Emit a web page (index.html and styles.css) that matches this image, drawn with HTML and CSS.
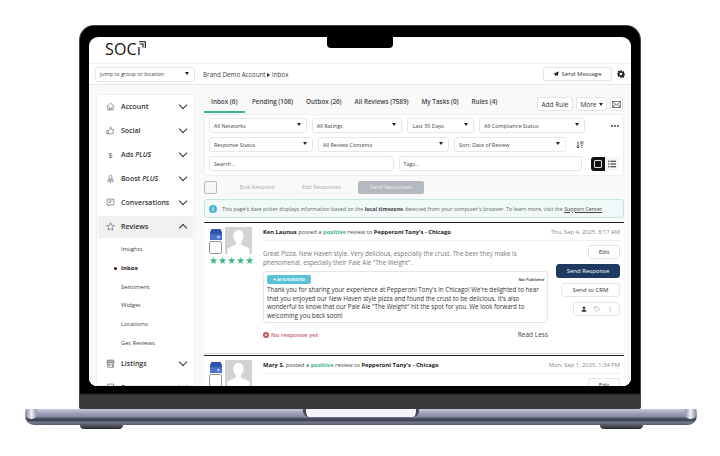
FILE: index.html
```html
<!DOCTYPE html>
<html lang="en">
<head>
    <meta charset="UTF-8">
    <title>SOCi Inbox</title>
    <link rel="stylesheet" href="styles.css">
</head>
<body>
    <div class="laptop">
        <div class="lid">
            <div class="notch"></div>
            <div class="screen">
                <!-- Logo Bar -->
                <div class="logo-bar">
                    <div class="logo">SOC<span class="logo-i">ı</span>
                        <svg class="logo-mark" viewBox="0 0 8 8"><path d="M1 .7h6.300V7M1.500 3h3.500v3.500" fill="none" stroke="#111" stroke-width="1.100"/></svg>
                    </div>
                </div>

                <!-- Toolbar -->
                <div class="toolbar">
                    <div class="select jump">jump to group or location<span class="caret"></span></div>
                    <div class="crumbs">Brand Demo Account <span class="crumb-arrow"></span> Inbox</div>
                    <div class="btn send-message">
                        <svg class="ico-s" viewBox="0 0 10 10"><path d="M9.500.5 7.800 8.500 5 6.800 3.800 9 3.300 6 .5 4.800z" fill="#222"/></svg>
                        Send Message
                    </div>
                    <svg class="gear" viewBox="0 0 24 24"><path d="M10 1h4l.6 3.200 2 .9 2.800-1.800 2.800 2.800-1.800 2.800.9 2 3.200.6v4l-3.200.6-.9 2 1.800 2.800-2.800 2.800-2.800-1.800-2 .9L14 23h-4l-.6-3.200-2-.9-2.800 1.800-2.800-2.800 1.800-2.800-.9-2L0 14v-4l3.200-.6.9-2L2.300 4.600l2.800-2.800 2.800 1.800 2-.9zM12 8a4 4 0 1 0 0 8 4 4 0 0 0 0-8z" fill="#222" fill-rule="evenodd"/></svg>
                </div>

                <div class="workspace">
                    <!-- Sidebar -->
                    <div class="sidebar">
                        <div class="nav-item">
                            <svg class="nav-ico" viewBox="0 0 12 12"><path d="M1 6 6 1.500 11 6M2.500 5v5.500h7V5M4.500 10.500V8h3v2.500" fill="none" stroke="#555" stroke-width=".8"/></svg>
                            <span class="nav-label">Account</span><span class="chev"></span>
                        </div>
                        <div class="nav-item">
                            <svg class="nav-ico" viewBox="0 0 12 12"><path d="M1 6h2v4.500H1zM3 6l2.500-2.500V1.500c1.200 0 1.500 1 1.300 3h3.200l-.8 6H3" fill="none" stroke="#555" stroke-width=".8"/></svg>
                            <span class="nav-label">Social</span><span class="chev"></span>
                        </div>
                        <div class="nav-item">
                            <span class="nav-ico dollar">$</span>
                            <span class="nav-label">Ads <em>PLUS</em></span><span class="chev"></span>
                        </div>
                        <div class="nav-item">
                            <svg class="nav-ico" viewBox="0 0 12 12"><path d="M6 1c1.800 1.500 2.200 3.500 2 6H4c-.2-2.500.2-4.500 2-6zM4 6.500 2.500 9v1.500L4.500 9M8 6.500 9.500 9v1.500L7.500 9M5.500 8.500h1v2.500h-1z" fill="none" stroke="#555" stroke-width=".8"/></svg>
                            <span class="nav-label">Boost <em>PLUS</em></span><span class="chev"></span>
                        </div>
                        <div class="nav-item">
                            <svg class="nav-ico" viewBox="0 0 12 12"><path d="M1.500 1.500h9v7.500H5L3.500 10.800V9h-2zM3.500 4h5M3.500 6h3" fill="none" stroke="#555" stroke-width=".8"/></svg>
                            <span class="nav-label">Conversations</span><span class="chev"></span>
                        </div>
                        <div class="nav-item active">
                            <svg class="nav-ico" viewBox="0 0 12 12"><path d="m6 1 1.500 3.400 3.700.4-2.800 2.400.8 3.600L6 9l-3.200 1.800.8-3.600L.8 4.800l3.700-.4z" fill="none" stroke="#555" stroke-width=".8"/></svg>
                            <span class="nav-label">Reviews</span><span class="chev up"></span>
                        </div>
                        <div class="sub-list">
                            <div class="sub-item">Insights</div>
                            <div class="sub-item current">Inbox</div>
                            <div class="sub-item">Sentiment</div>
                            <div class="sub-item">Widget</div>
                            <div class="sub-item">Locations</div>
                            <div class="sub-item">Get Reviews</div>
                        </div>
                        <div class="nav-item">
                            <svg class="nav-ico" viewBox="0 0 12 12"><path d="M2 1.500h8l1 3H1zM2 4.500V11h8V4.500M3 1.500v3M5 1.500v3M7 1.500v3M9 1.500v3M3.500 6.500h2v2h-2zM7 6.500h1.500V11" fill="none" stroke="#555" stroke-width=".8"/></svg>
                            <span class="nav-label">Listings</span><span class="chev"></span>
                        </div>
                        <div class="nav-item">
                            <svg class="nav-ico" viewBox="0 0 12 12"><path d="M2 1.500h8v9H2z" fill="none" stroke="#555" stroke-width=".8"/></svg>
                            <span class="nav-label">Surveys</span><span class="chev"></span>
                        </div>
                    </div>

                    <!-- Main -->
                    <div class="main">
                        <div class="tabs">
                            <div class="tab selected">Inbox (6)</div>
                            <div class="tab">Pending (106)</div>
                            <div class="tab">Outbox (26)</div>
                            <div class="tab">All Reviews (7589)</div>
                            <div class="tab">My Tasks (0)</div>
                            <div class="tab">Rules (4)</div>
                            <div class="tab-actions">
                                <div class="btn add-rule">Add Rule</div>
                                <div class="btn more">More <span class="caret"></span></div>
                                <div class="btn mail">
                                    <svg class="ico-m" viewBox="0 0 12 10"><path d="M.5.500h11v9H.5zM.5.500 6 5.500 11.500.500M.5 9.500l4-5M11.500 9.500l-4-5" fill="none" stroke="#222" stroke-width=".9"/></svg>
                                </div>
                            </div>
                        </div>

                        <div class="filters">
                            <div class="filter-row">
                                <div class="select w98">All Networks<span class="caret"></span></div>
                                <div class="select w91">All Ratings<span class="caret"></span></div>
                                <div class="select w67">Last 30 Days<span class="caret"></span></div>
                                <div class="select w106">All Compliance Status<span class="caret"></span></div>
                                <svg class="dots" viewBox="0 0 8 2"><circle cx="1" cy="1" r=".9" fill="#333"/><circle cx="4" cy="1" r=".9" fill="#333"/><circle cx="7" cy="1" r=".9" fill="#333"/></svg>
                            </div>
                            <div class="filter-row">
                                <div class="select w104">Response Status<span class="caret"></span></div>
                                <div class="select w131">All Review Contents<span class="caret"></span></div>
                                <div class="select w112">Sort: Date of Review<span class="caret"></span></div>
                                <svg class="sort-ico" viewBox="0 0 10 10"><path d="M2.500 1v7.500M.8 6.800l1.700 2 1.700-2M5 1.200h4.500M5.500 3.500h3.500M6 5.800h2M6.500 8h1" fill="none" stroke="#222" stroke-width="1"/></svg>
                            </div>
                            <div class="filter-row">
                                <div class="select w185">Search ..</div>
                                <div class="select w184">Tags ..</div>
                                <div class="view-toggle">
                                    <div class="view-card"><span></span></div>
                                    <div class="view-lines">
                                        <svg viewBox="0 0 10 10"><path d="M3 1.500h7M3 5h7M3 8.500h7M0 1.500h1.800M0 5h1.800M0 8.500h1.800" stroke="#222" stroke-width="1.400" fill="none"/></svg>
                                    </div>
                                </div>
                            </div>
                        </div>

                        <div class="bulk-row">
                            <div class="check big"></div>
                            <div class="bulk-btn">Bulk Respond</div>
                            <div class="bulk-btn edit">Edit Responses</div>
                            <div class="bulk-btn send">Send Responses</div>
                        </div>

                        <div class="notice">
                            <span class="notice-dot">i</span>
                            <span>This page's date picker displays information based on the <b>local timezone</b> detected from your computer's browser. To learn more, visit the <u>Support Center</u>.</span>
                        </div>

                        <!-- Review 1 -->
                        <div class="review">
                            <div class="review-side">
                                <div class="side-top">
                                    <div class="side-marks">
                                        <svg class="gmb" viewBox="0 0 12 11"><path d="M1.500 0h9L12 4v7H0V4z" fill="#4a74cf"/><path d="M0 4a1.500 1.500 0 0 0 3 0 1.500 1.500 0 0 0 3 0 1.500 1.500 0 0 0 3 0 1.500 1.500 0 0 0 3 0L10.500 0h-9z" fill="#2f54a8"/><circle cx="8.500" cy="8" r="1.300" fill="#b9cdf3"/></svg>
                                        <div class="check"></div>
                                    </div>
                                    <svg class="avatar" viewBox="0 0 27 27"><rect width="27" height="27" fill="#d1d3d4"/><path d="M13.500 3c3.500 0 5.500 3 5 7-.4 2.800-1.600 4.500-2.500 5.500v2l8.500 4V27h-22v-5.500l8.500-4v-2c-.9-1-2.100-2.700-2.500-5.500-.5-4 1.500-7 5-7z" fill="#fff"/></svg>
                                </div>
                                <div class="stars">&#9733;&#9733;&#9733;&#9733;&#9733;</div>
                            </div>
                            <div class="review-body">
                                <div class="review-head">
                                    <span><b>Ken Launus</b> posted a <b class="positive">positive</b> review to <b>Pepperoni Tony's - Chicago</b></span>
                                    <span class="review-date">Thu, Sep 4, 2025, 8:17 AM</span>
                                </div>
                                <div class="review-cols">
                                    <div class="review-text">
                                        <p class="quote">Great Pizza. New Haven style. Very delicious, especially the crust. The beer they make is phenomenal, especially their Pale Ale "The Weight".</p>
                                        <div class="reply">
                                            <div class="reply-top">
                                                <span class="ai-badge">&#10022; AI SUGGESTED</span>
                                                <span class="not-published">Not Published</span>
                                            </div>
                                            <p>Thank you for sharing your experience at Pepperoni Tony's in Chicago! We're delighted to hear that you enjoyed our New Haven style pizza and found the crust to be delicious. It's also wonderful to know that our Pale Ale "The Weight" hit the spot for you. We look forward to welcoming you back soon!</p>
                                        </div>
                                        <div class="status-row">
                                            <span class="no-response"><span class="x-dot">&times;</span> No response yet</span>
                                            <span class="read-less">Read Less</span>
                                        </div>
                                    </div>
                                    <div class="review-actions">
                                        <div class="btn edit-btn">Edit</div>
                                        <div class="btn primary">Send Response</div>
                                        <div class="btn crm">Send to CRM</div>
                                        <div class="btn icon-group">
                                            <svg viewBox="0 0 8 8"><path d="M4 .5a1.800 1.800 0 1 1 0 3.600A1.800 1.800 0 0 1 4 .5zM.8 7.500c0-1.800 1.400-2.800 3.200-2.800s3.200 1 3.200 2.800z" fill="#333"/></svg>
                                            <svg viewBox="0 0 8 8"><path d="M.8 1h3l3.400 3.300-3 3L.8 4z" fill="none" stroke="#888" stroke-width=".7"/></svg>
                                            <svg viewBox="0 0 8 8"><path d="M4 1v.8M4 3.600v.8M4 6.200V7" stroke="#333" stroke-width="1"/></svg>
                                        </div>
                                    </div>
                                </div>
                            </div>
                        </div>

                        <!-- Review 2 -->
                        <div class="review">
                            <div class="review-side">
                                <div class="side-top">
                                    <div class="side-marks">
                                        <svg class="gmb" viewBox="0 0 12 11"><path d="M1.500 0h9L12 4v7H0V4z" fill="#4a74cf"/><path d="M0 4a1.500 1.500 0 0 0 3 0 1.500 1.500 0 0 0 3 0 1.500 1.500 0 0 0 3 0 1.500 1.500 0 0 0 3 0L10.500 0h-9z" fill="#2f54a8"/><circle cx="8.500" cy="8" r="1.300" fill="#b9cdf3"/></svg>
                                        <div class="check"></div>
                                    </div>
                                    <svg class="avatar" viewBox="0 0 27 27"><rect width="27" height="27" fill="#d1d3d4"/><path d="M13.500 3c3.500 0 5.500 3 5 7-.4 2.800-1.600 4.500-2.500 5.500v2l8.500 4V27h-22v-5.500l8.500-4v-2c-.9-1-2.100-2.700-2.500-5.500-.5-4 1.500-7 5-7z" fill="#fff"/></svg>
                                </div>
                            </div>
                            <div class="review-body">
                                <div class="review-head">
                                    <span><b>Mary S.</b> posted a <b class="positive">positive</b> review to <b>Pepperoni Tony's - Chicago</b></span>
                                    <span class="review-date">Mon, Sep 1, 2025, 1:34 PM</span>
                                </div>
                                <div class="review-cols">
                                    <div class="review-text"></div>
                                    <div class="review-actions">
                                        <div class="btn edit-btn">Edit</div>
                                    </div>
                                </div>
                            </div>
                        </div>
                    </div>
                </div>
            </div>
        </div>
        <div class="base">
            <div class="base-cap left"></div>
            <div class="thumb"></div>
            <div class="base-cap right"></div>
        </div>
        <div class="feet"><span class="foot"></span><span class="foot"></span></div>
    </div>
</body>
</html>
```

FILE: styles.css
```css
* {
    margin: 0;
    padding: 0;
    box-sizing: border-box;
}
html, body {
    height: 456px;
    overflow: hidden;
    background-color: #fff;
}
body {
    font-family: 'Open Sans', sans-serif;
    color: #333;
    padding-top: 25px;
}
.laptop {
    width: 720px;
}

/* Lid */
.lid {
    position: relative;
    width: 562px;
    height: 384px;
    margin-left: 79px;
    padding: 11px 9px 0;
    background: linear-gradient(#000 0, #000 367px, #393939 369px);
    border: 1px solid #444;
    border-bottom: 0;
    border-radius: 15px 15px 2px 2px;
}
.notch {
    position: absolute;
    top: 11px;
    left: 247px;
    width: 66px;
    height: 11px;
    background-color: #000;
    border-radius: 0 0 4px 4px;
    z-index: 2;
}
.screen {
    height: 349px;
    background-color: #fff;
    border-radius: 9px 9px 8px 8px;
    overflow: hidden;
}

/* Base */
.base {
    position: relative;
    width: 672px;
    height: 16px;
    margin-left: 25px;
    background: linear-gradient(#c6cadb 0, #9ea3b9 25%, #868ba2 48%, #3f4356 62%, #43475a 72%, #74788c 84%, #565a6c 100%);
    border-radius: 1px 1px 9px 9px;
}
.thumb {
    position: absolute;
    top: 0;
    left: 278px;
    width: 116px;
    height: 8px;
    background-color: #f3f5fb;
    border-left: 3px solid #444858;
    border-right: 3px solid #444858;
    border-radius: 0 0 6px 6px;
}
.base-cap {
    position: absolute;
    top: 0;
    width: 11px;
    height: 10px;
    background: linear-gradient(90deg, #8b90a5, #f1f3f8 50%, #8b90a5);
}
.base-cap.left {
    left: 1px;
    border-radius: 0 0 5px 5px;
}
.base-cap.right {
    right: 1px;
    border-radius: 0 0 5px 5px;
}
.feet {
    display: flex;
    justify-content: space-between;
    width: 563px;
    margin-left: 80px;
}
.foot {
    width: 43px;
    height: 4px;
    background: linear-gradient(#55585f, #2b2d33);
    border-radius: 0 0 6px 6px;
}

/* Logo bar */
.logo-bar {
    height: 27px;
    padding: 1px 0 0 16px;
    border-bottom: 1px solid #eee;
}
.logo {
    position: relative;
    display: inline-block;
    font-size: 16px;
    line-height: 22px;
    color: #111;
    letter-spacing: .2px;
}
.logo-i {
    font-size: 15px;
}
.logo-mark {
    position: absolute;
    top: 3px;
    right: -5px;
    width: 8px;
    height: 8px;
}

/* Toolbar */
.toolbar {
    display: flex;
    align-items: center;
    height: 21px;
    padding-left: 6px;
    border-bottom: 1px solid #e8e8e8;
    font-size: 6.3px;
}
.select {
    position: relative;
    display: flex;
    align-items: center;
    height: 15px;
    padding: 0 4px;
    background-color: #fff;
    border: 1px solid #e6e6e6;
    border-radius: 3px;
    font-size: 5.4px;
    color: #444;
}
.caret {
    display: inline-block;
    width: 0;
    height: 0;
    border-left: 2px solid transparent;
    border-right: 2px solid transparent;
    border-top: 3px solid #222;
}
.select .caret {
    position: absolute;
    right: 5px;
    top: 4px;
}
.jump {
    width: 100px;
}
.crumbs {
    margin-left: 8px;
    color: #444;
}
.crumb-arrow {
    display: inline-block;
    border-top: 2px solid transparent;
    border-bottom: 2px solid transparent;
    border-left: 3px solid #222;
}
.btn {
    display: flex;
    align-items: center;
    justify-content: center;
    background-color: #fff;
    border: 1px solid #e4e4e4;
    border-radius: 3px;
    color: #333;
}
.send-message {
    width: 69px;
    height: 14px;
    margin-left: auto;
    gap: 2px;
    font-size: 6px;
}
.ico-s {
    width: 6px;
    height: 6px;
}
.gear {
    width: 8px;
    height: 8px;
    margin: 0 6px 0 5px;
}

/* Layout */
.workspace {
    display: flex;
    height: 301px;
    padding: 9px 7px 0 7px;
    background-color: #f9f9f9;
}
.sidebar {
    width: 99px;
    padding: 0 1px;
    background-color: #fff;
    border: 1px solid #eee;
    border-radius: 3px;
    flex-shrink: 0;
}
.nav-item {
    display: flex;
    align-items: center;
    height: 22px;
    margin-bottom: 2.2px;
    padding: 0 6px 0 8px;
    font-size: 7px;
    font-weight: 600;
    color: #333;
}
.nav-item.active {
    background-color: #f1f1f1;
}
.nav-ico {
    width: 9px;
    height: 9px;
    margin-right: 6px;
    flex-shrink: 0;
}
.dollar {
    font-size: 8px;
    font-weight: 400;
    line-height: 9px;
    color: #555;
    text-align: center;
}
.nav-label em {
    font-weight: 600;
}
.chev {
    width: 6px;
    height: 6px;
    margin: -3px 1px 0 auto;
    border-right: 1px solid #333;
    border-bottom: 1px solid #333;
    transform: rotate(45deg);
}
.chev.up {
    margin-top: 3px;
    transform: rotate(225deg);
}
.sub-item {
    position: relative;
    height: 18.7px;
    padding-left: 23px;
    font-size: 6px;
    line-height: 18.7px;
    color: #444;
}
.sub-item.current {
    font-weight: 700;
    color: #222;
}
.sub-item.current::before {
    content: "";
    position: absolute;
    left: 16px;
    top: 8px;
    width: 3px;
    height: 3px;
    background-color: #111;
    border-radius: 50%;
}
.main {
    width: 420px;
    margin-left: 9px;
    flex-shrink: 0;
}

/* Tabs */
.tabs {
    display: flex;
    align-items: flex-start;
    height: 20px;
}
.tab {
    height: 14px;
    padding: 3px 6px 0 7px;
    font-size: 6.3px;
    font-weight: 600;
    color: #444;
    line-height: 9px;
    white-space: nowrap;
}
.tab.selected {
    box-sizing: content-box;
    width: 34px;
    padding-right: 0;
    border-bottom: 2px solid #3fb58e;
}
.tab-actions {
    display: flex;
    gap: 3px;
    margin: 3px 0 0 auto;
    height: 14px;
}
.add-rule {
    width: 36px;
    font-size: 6.5px;
}
.more {
    width: 31px;
    gap: 2px;
    font-size: 6.5px;
}
.mail {
    width: 13px;
    margin-right: 1px;
}
.ico-m {
    width: 9px;
    height: 7px;
}

/* Filters */
.filters {
    display: flex;
    flex-direction: column;
    gap: 4px;
    height: 62px;
    padding: 3px 4px 0 4px;
    background-color: #fff;
    border: 1px solid #efefef;
    border-radius: 3px;
}
.filter-row {
    display: flex;
    align-items: center;
    gap: 5px;
}
.w98 { width: 98px; }
.w91 { width: 91px; }
.w67 { width: 67px; }
.w106 { width: 106px; }
.w104 { width: 104px; }
.w131 { width: 131px; }
.w112 { width: 112px; }
.w185 { width: 185px; }
.w184 { width: 184px; }
.dots {
    width: 8px;
    height: 2px;
    margin-left: 21px;
}
.sort-ico {
    width: 8px;
    height: 8px;
    margin-left: 5px;
}
.view-toggle {
    display: flex;
    align-items: center;
    height: 14px;
    margin-left: 4px;
}
.view-card {
    display: flex;
    align-items: center;
    justify-content: center;
    width: 14px;
    height: 14px;
    background-color: #111;
    border-radius: 3px 0 0 3px;
}
.view-card span {
    width: 8px;
    height: 8px;
    border: 1px solid #ddd;
    border-radius: 1px;
}
.view-lines {
    display: flex;
    align-items: center;
    justify-content: center;
    width: 14px;
    height: 14px;
    background-color: #f7f7f7;
    border-radius: 0 3px 3px 0;
}
.view-lines svg {
    width: 8px;
    height: 8px;
}

/* Bulk row */
.bulk-row {
    display: flex;
    align-items: center;
    height: 13px;
    margin-top: 5px;
    font-size: 5.5px;
    color: #aaa;
}
.check {
    width: 13px;
    height: 13px;
    background-color: #fff;
    border: 1px solid #999;
    border-radius: 2px;
}
.check.big {
    background-color: #f7f7f7;
    border-color: #bbb;
    margin-right: 11px;
}
.bulk-btn {
    width: 58px;
    text-align: center;
    line-height: 12px;
    border-bottom: 1px solid #eee;
}
.bulk-btn.edit {
    width: 61px;
    margin-left: 5px;
}
.bulk-btn.send {
    width: 66px;
    margin-left: 6px;
    height: 13px;
    background-color: #b4b9c0;
    border: 0;
    border-radius: 2px;
    color: #eee;
    line-height: 13px;
}

/* Notice */
.notice {
    display: flex;
    align-items: center;
    gap: 5px;
    height: 19px;
    margin-top: 5px;
    padding-left: 4px;
    background-color: #f0f9f8;
    border: 1px solid #c5e6e4;
    border-radius: 3px;
    font-size: 5.3px;
    color: #666;
    white-space: nowrap;
}
.notice b,
.notice u {
    color: #444;
}
.notice-dot {
    width: 8px;
    height: 8px;
    background-color: #4db1d4;
    border-radius: 50%;
    color: #fff;
    font-size: 6px;
    font-weight: 700;
    line-height: 8px;
    text-align: center;
    flex-shrink: 0;
}

/* Review cards */
.review {
    display: flex;
    height: 132px;
    margin-top: 4px;
    background-color: #fff;
    border-top: 1px solid #222;
    border-bottom: 1px solid #ddd;
}
.review + .review {
    margin-top: 1px;
}
.review-side {
    width: 59px;
    padding: 4px 0 0 5px;
    flex-shrink: 0;
}
.side-top {
    display: flex;
    gap: 3px;
}
.side-marks {
    display: flex;
    flex-direction: column;
    align-items: center;
    padding-top: 2px;
}
.gmb {
    display: block;
    width: 12px;
    height: 11px;
    margin-bottom: 1px;
}
.avatar {
    display: block;
    width: 27px;
    height: 27px;
}
.stars {
    margin-top: 2px;
    font-size: 9.5px;
    line-height: 10px;
    color: #3eb489;
    letter-spacing: -.1px;
}
.review-body {
    flex: 1;
    padding-right: 4px;
}
.review-head {
    display: flex;
    justify-content: space-between;
    align-items: center;
    height: 18px;
    border-bottom: 1px solid #eee;
    font-size: 5.8px;
    color: #444;
}
.review-head b {
    color: #222;
}
.review-head b.positive {
    color: #3eb489;
}
.review-date {
    color: #888;
}
.review-cols {
    display: flex;
}
.review-text {
    width: 285px;
}
.quote {
    margin-top: 9px;
    font-size: 6.25px;
    line-height: 8.5px;
    color: #777;
}
.reply {
    height: 52px;
    margin-top: 4px;
    padding: 3px 3px 0 3px;
    border: 1px solid #e6e6e6;
    border-radius: 3px;
}
.reply p {
    margin-top: 2px;
    font-size: 6.2px;
    line-height: 8.5px;
    color: #333;
}
.reply-top {
    display: flex;
    justify-content: space-between;
    align-items: center;
}
.ai-badge {
    width: 44px;
    height: 9px;
    background-color: #59c1d8;
    border-radius: 2px;
    color: #fff;
    font-size: 4px;
    font-weight: 700;
    line-height: 9px;
    text-align: center;
    white-space: nowrap;
}
.not-published {
    font-size: 4px;
    font-style: italic;
    font-weight: 600;
    color: #333;
}
.status-row {
    display: flex;
    justify-content: space-between;
    align-items: center;
    margin-top: 7px;
}
.no-response {
    display: flex;
    align-items: center;
    gap: 2px;
    font-size: 6px;
    font-weight: 600;
    color: #c9596a;
}
.x-dot {
    width: 6px;
    height: 6px;
    background-color: #c9505f;
    border-radius: 50%;
    color: #fff;
    font-size: 6px;
    line-height: 6px;
    text-align: center;
}
.read-less {
    font-size: 6.5px;
    color: #444;
}
.review-actions {
    display: flex;
    flex-direction: column;
    align-items: flex-end;
    flex: 1;
    padding-top: 4px;
    font-size: 6px;
}
.edit-btn {
    width: 32px;
    height: 14px;
}
.primary {
    width: 64px;
    height: 14px;
    margin-top: 5px;
    background-color: #1f3a61;
    border-color: #1f3a61;
    color: #fff;
}
.crm {
    width: 59px;
    height: 14px;
    margin-top: 5px;
}
.icon-group {
    justify-content: space-around;
    width: 47px;
    height: 14px;
    margin-top: 5px;
    padding: 0 3px;
}
.icon-group svg {
    width: 6px;
    height: 6px;
}
```
